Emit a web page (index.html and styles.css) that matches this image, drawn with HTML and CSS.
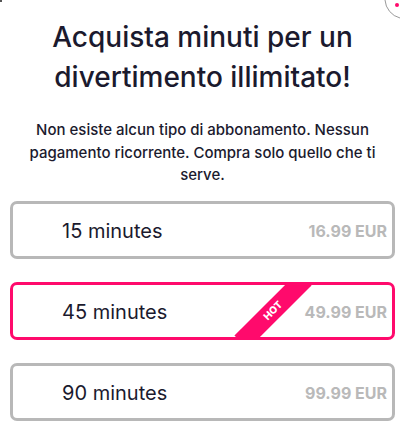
FILE: index.html
```html
<!DOCTYPE html>
<html lang="it">

<head>
    <meta charset="UTF-8" />
    <meta name="viewport" content="width=device-width, initial-scale=1.0" />
    <title>Acquista minuti</title>
    <link rel="stylesheet" href="styles.css">
</head>

<body>
    <div class="corner-mark"></div>
    <svg class="close-btn" width="17" height="20" viewBox="0 0 17 20">
        <path d="M2 0 A20 20 0 0 0 17 18" fill="none" stroke="#999" stroke-width="1" />
        <circle cx="14" cy="5" r="2" fill="#ff0a6c" />
    </svg>

    <div class="container">
        <h1>Acquista minuti per un divertimento illimitato!</h1>
        <p class="subtitle">Non esiste alcun tipo di abbonamento. Nessun pagamento ricorrente. Compra solo quello che ti serve.</p>

        <div class="plans">
            <div class="plan">
                <span class="plan-name">15 minutes</span>
                <span class="plan-price">16.99 EUR</span>
            </div>
            <div class="plan hot">
                <span class="plan-name">45 minutes</span>
                <span class="ribbon">HOT</span>
                <span class="plan-price">49.99 EUR</span>
            </div>
            <div class="plan">
                <span class="plan-name">90 minutes</span>
                <span class="plan-price">99.99 EUR</span>
            </div>
        </div>
    </div>
</body>

</html>
```

FILE: styles.css
```css
:root {
    --text-color: #1b1a2e;
    --muted: #b9b9b9;
    --border: #b8b8b8;
    --primary: #ff0a6c;
}

body {
    font-family: 'Inter', 'Noto Sans', sans-serif;
    color: var(--text-color);
    background: #ffffff;
    margin: 0;
    position: relative;
    overflow: hidden;
}

.corner-mark {
    position: absolute;
    top: 0;
    left: 0;
    width: 2px;
    height: 2px;
    background: #555;
}

.close-btn {
    position: absolute;
    top: 0;
    right: 0;
}

.container {
    padding: 17px 5px 0 10px;
}

h1 {
    margin: 0;
    font-size: 28px;
    line-height: 40px;
    font-weight: 500;
    text-align: center;
}

.subtitle {
    margin: 22px 8px 14px;
    font-size: 15px;
    line-height: 22.5px;
    font-weight: 500;
    text-align: center;
}

.plans {
    display: flex;
    flex-direction: column;
    gap: 23px;
}

.plan {
    position: relative;
    overflow: hidden;
    display: flex;
    align-items: center;
    height: 58px;
    box-sizing: border-box;
    border: 3px solid var(--border);
    border-radius: 7px;
    padding: 3px 5px 0 49px;
}

.plan.hot {
    border-color: var(--primary);
}

.plan-name {
    flex: 1;
    font-size: 20px;
}

.plan-price {
    font-size: 16px;
    font-weight: 700;
    color: var(--muted);
}

.ribbon {
    position: absolute;
    left: 215px;
    top: 16px;
    width: 90px;
    height: 19px;
    line-height: 19px;
    background: var(--primary);
    color: #fff;
    font-size: 10px;
    font-weight: 800;
    text-align: center;
    transform: rotate(-45deg);
}
```
